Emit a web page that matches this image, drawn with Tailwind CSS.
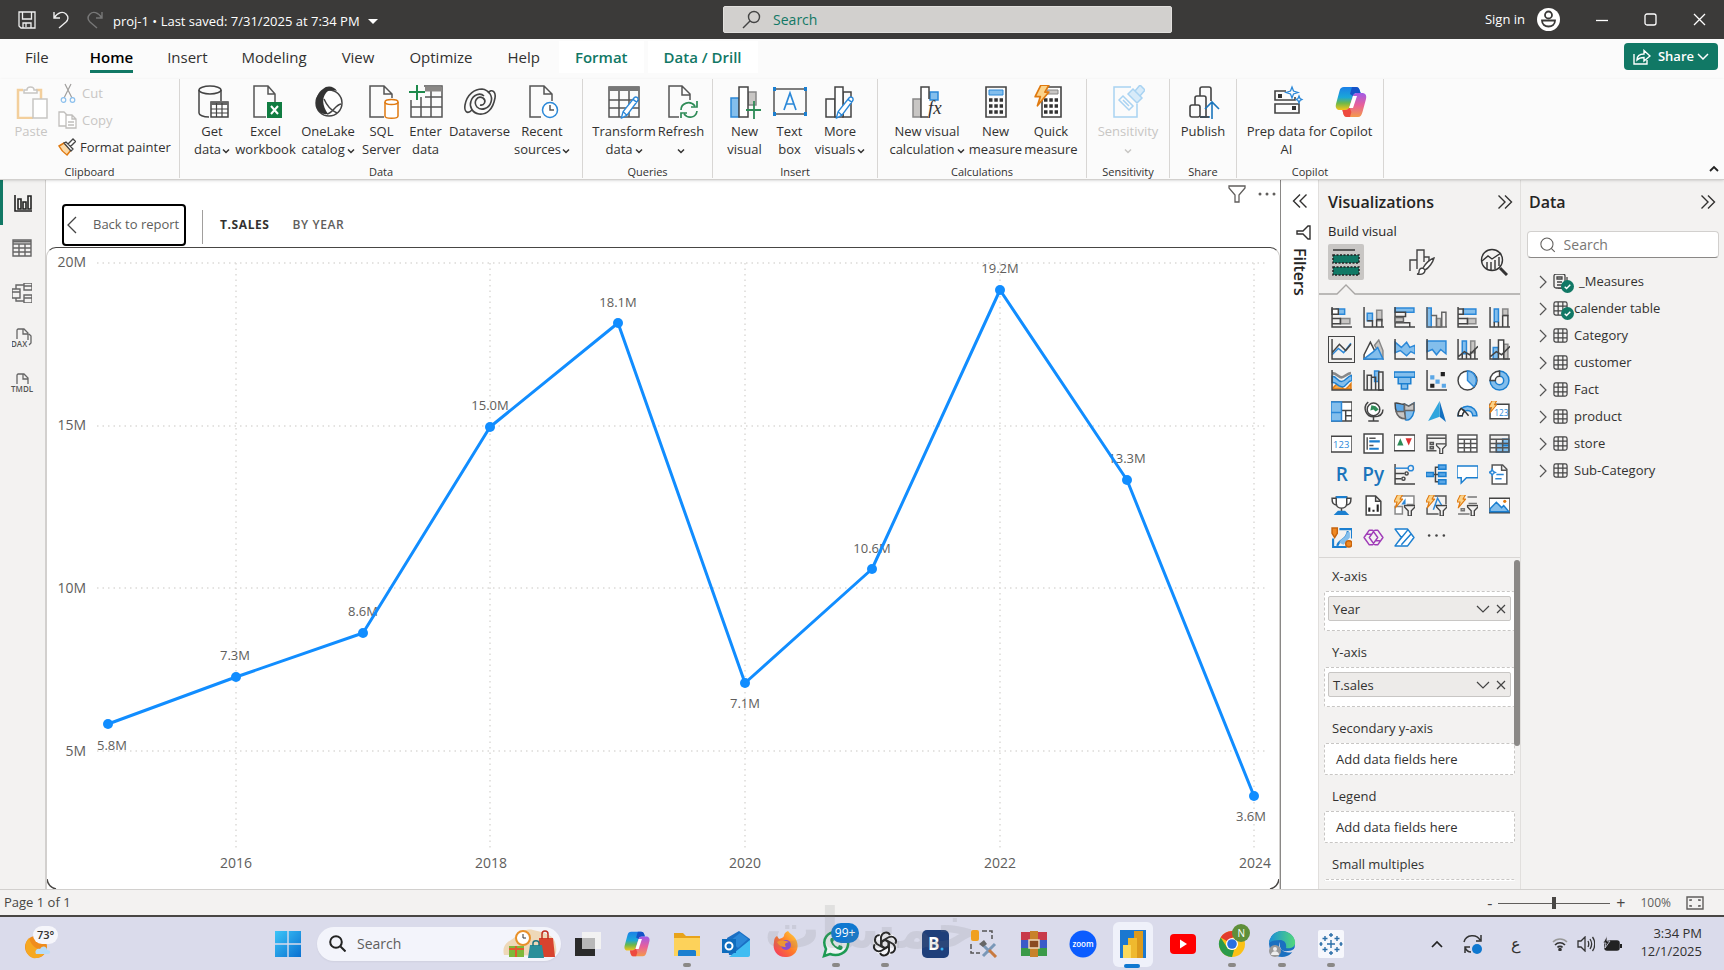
<!DOCTYPE html>
<html lang="en">
<head>
  <meta charset="UTF-8" />
  <meta name="viewport" content="width=device-width, initial-scale=1.0" />
  <title>proj-1 - Power BI Desktop</title>
  <script src="https://cdn.jsdelivr.net/npm/@tailwindcss/browser@4"></script>
</head>
<body class="h-screen flex flex-col overflow-hidden bg-[#f3f2f1] font-['Open_Sans',sans-serif] text-[13px] text-[#323130]">

  <!-- Shared gradients and symbols -->
  <svg class="absolute size-0" aria-hidden="true">
    <defs>
      <linearGradient id="copA" x1="0" y1="0" x2="0" y2="1"><stop offset="0" stop-color="#1b7fe8" /><stop offset=".45" stop-color="#1aa7d8" /><stop offset=".7" stop-color="#6cb84a" /><stop offset="1" stop-color="#f6c51a" /></linearGradient>
      <linearGradient id="copB" x1="0" y1="0" x2="0" y2="1"><stop offset="0" stop-color="#a05be8" /><stop offset=".5" stop-color="#e8609a" /><stop offset="1" stop-color="#f49a4a" /></linearGradient>
      <linearGradient id="win" x1="0" y1="0" x2="1" y2="1"><stop offset="0" stop-color="#3cc5f8" /><stop offset="1" stop-color="#0a6fd0" /></linearGradient>
      <linearGradient id="fox" x1="1" y1="0" x2="0" y2="1"><stop offset="0" stop-color="#ffd83a" /><stop offset=".5" stop-color="#ff7a2a" /><stop offset="1" stop-color="#f0306a" /></linearGradient>
      <linearGradient id="edge" x1="0" y1="0" x2="1" y2="0"><stop offset="0" stop-color="#1a8fd8" /><stop offset="1" stop-color="#52d87a" /></linearGradient>
    </defs>
    <symbol id="copilot" viewBox="0 0 34 34">
      <path d="M10 2h12c2 0 3 1 3.600 3l1 3h-4c-2 0-3 1-3.600 3l-3 10c-.7 2.500-2 4-4.500 4H6c-3 0-5-2-4-6L5.500 6C6.300 3 7.500 2 10 2z" fill="url(#copA)" />
      <path d="M18 2h4c2 0 3 1 3.600 3l1 3h-4c-2 0-3 1-3.600 3L16 9z" fill="#1553c8" />
      <path d="M24 32H13c-2 0-3-1-3.600-3l-1-4h3c2 0 3.300-1 4-3l3.500-11c.7-2 2-3 4-3H28c3 0 5 2 4 6l-3.500 13c-.8 3-2 5-4.500 5z" fill="url(#copB)" />
      <path d="M16 32h-3c-2 0-3-1-3.600-3l-1-4h3c2 0 3.300-1 4-3l2 5z" fill="#ee4a3e" />
      <path d="M19 11h4l-4 12h-4z" fill="#fff" />
    </symbol>
    <symbol id="chev" viewBox="0 0 8 8"><path d="M1 2.500L4 5.500L7 2.500" fill="none" stroke="currentColor" stroke-width="1.500" /></symbol>
    <symbol id="pencil" viewBox="0 0 22 26"><path d="M1 25l2-7L15 3c2-2 5 0 4 3L7 22zM3 18l4 4M14 5l4 3" fill="#fff" stroke="#2b88d8" stroke-width="1.500" stroke-linejoin="round" /></symbol>
    <symbol id="bolt" viewBox="0 0 14 20"><path d="M6 1h7l-3.500 6H13L3 19l2.500-8H1z" fill="#fbd38a" stroke="#e07a10" stroke-width="1.500" stroke-linejoin="round" /></symbol>
    <symbol id="table" viewBox="0 0 16 16"><path d="M3 1h10a2 2 0 0 1 2 2v10a2 2 0 0 1-2 2H3a2 2 0 0 1-2-2V3a2 2 0 0 1 2-2zM1 5.500h14M1 10.500h14M5.500 1v14M10.500 1v14" fill="none" stroke="#444" stroke-width="1.300" /></symbol>
    <symbol id="funnel" viewBox="0 0 12 12"><path d="M1 1h10v1.500L7.500 6v5h-3V6L1 2.500z" fill="#f3f2f1" stroke="#444" stroke-width="1.300" /></symbol>
    <symbol id="check" viewBox="0 0 14 14"><circle cx="7" cy="7" r="7" fill="#117865" /><path d="M4 7.200l2 2L10 5.200" fill="none" stroke="#fff" stroke-width="1.500" /></symbol>
    <symbol id="dbl" viewBox="0 0 16 16"><path d="M1.500 1.500L8 8l-6.500 6.500M8 1.500L14.500 8L8 14.500" fill="none" stroke="#323130" stroke-width="1.400" /></symbol>
  </svg>

  <!-- Title bar -->
  <header class="h-[39px] shrink-0 bg-[#3b3a39] text-white grid grid-cols-[42fr_26fr_32fr] items-center">
    <div class="flex items-center pl-[18px]">
      <button aria-label="Save"><svg class="size-[18px]" viewBox="0 0 18 18" fill="none" stroke="#eee" stroke-width="1.300"><path d="M1 1h16v16H3l-2-2zM4.500 1v7h9V1M5 17v-5h8v5M8 12v4" /></svg></button>
      <button aria-label="Undo" class="ml-4"><svg class="size-[18px]" viewBox="0 0 18 18" fill="none" stroke="#eee" stroke-width="1.400"><path d="M2 1v6h6M2 7C6 1 11 0 14 3s2 6 0 8l-7 6" /></svg></button>
      <button aria-label="Redo" class="ml-4"><svg class="size-[18px]" viewBox="0 0 18 18" fill="none" stroke="#777" stroke-width="1.400"><path d="M16 1v6h-6M16 7C12 1 7 0 4 3s-2 6 0 8l7 6" /></svg></button>
      <button class="ml-[9px] pt-1 flex items-center gap-2 whitespace-nowrap">proj-1 • Last saved: 7/31/2025 at 7:34 PM
        <svg class="w-[10px] h-[5px]" viewBox="0 0 10 5"><path d="M0 0h10L5 5z" fill="#fff" /></svg></button>
    </div>
    <label class="h-[27px] -ml-px bg-[#d2d0ce] rounded-xs border border-[#e1dfdd] flex items-center pl-[18px] gap-3">
      <svg class="size-[19px]" viewBox="0 0 19 19" fill="none" stroke="#444" stroke-width="1.400"><circle cx="12" cy="7" r="5.500" /><path d="M8 11l-7 7" /></svg>
      <input type="text" aria-label="Search" placeholder="Search" class="flex-1 bg-transparent outline-none text-sm placeholder:text-[#117865]" />
    </label>
    <div class="flex items-center justify-end pr-[18px]">
      <button class="flex items-center gap-3">Sign in
        <svg class="size-[23px]" viewBox="0 0 23 23"><circle cx="11.500" cy="11.500" r="11.500" fill="#fff" /><g fill="none" stroke="#3b3a39" stroke-width="1.800"><circle cx="11.500" cy="7" r="3.500" /><path d="M5 12.500h13c0 4-3 6-6.500 6S5 16.500 5 12.500z" /></g></svg></button>
      <button aria-label="Minimize" class="ml-9"><svg class="size-3" viewBox="0 0 12 12"><path d="M0 6.500h12" stroke="#fff" stroke-width="1.300" /></svg></button>
      <button aria-label="Maximize" class="ml-9"><svg class="size-[13px]" viewBox="0 0 13 13"><rect x="1" y="1" width="11" height="11" rx="2" fill="none" stroke="#fff" stroke-width="1.300" /></svg></button>
      <button aria-label="Close" class="ml-9"><svg class="size-[13px]" viewBox="0 0 13 13"><path d="M1 1l11 11M12 1L1 12" stroke="#fff" stroke-width="1.300" /></svg></button>
    </div>
  </header>

  <!-- Ribbon tabs -->
  <nav class="h-10 shrink-0 bg-[#fbfbfb] flex items-start gap-[35px] pl-[25px] pr-[6px] pt-[2px] text-[15px]">
    <button class="mr-[6px] h-8">File</button>
    <button class="h-8 font-semibold border-b-[3px] border-[#117865] pt-[3px] text-black">Home</button>
    <button class="h-8 -ml-px">Insert</button>
    <button class="h-8 -ml-px">Modeling</button>
    <button class="h-8">View</button>
    <button class="h-8">Optimize</button>
    <button class="h-8">Help</button>
    <div class="flex gap-1 -ml-4 font-semibold text-[#117865]">
      <button class="h-8 bg-white px-4">Format</button>
      <button class="h-8 bg-white px-4">Data / Drill</button>
    </div>
    <button class="ml-auto mt-[2px] h-[27px] w-[94px] rounded-[4px] bg-[#117865] text-white text-[13px] font-semibold flex items-center justify-center gap-[7px]">
      <svg class="w-[18px] h-4" viewBox="0 0 18 16" fill="none" stroke="#fff" stroke-width="1.400"><path d="M1 5v10h13v-4M4 11c0-4 3-6 7-6V1.500L17 7l-6 5V8.500c-3 0-5 .5-7 2.500z" /></svg>
      <span>Share</span>
      <svg class="-ml-1 w-3 h-[7px]" viewBox="0 0 12 7"><path d="M1 1l5 5l5-5" fill="none" stroke="#fff" stroke-width="1.500" /></svg>
    </button>
  </nav>

  <!-- Ribbon -->
  <section class="relative z-10 h-[101px] shrink-0 bg-[#fbfbfb] border-b border-[#d2d0ce] shadow-sm flex items-start leading-[18px] [&_.grp]:h-[99px] [&_.grp]:flex [&_.grp]:flex-col [&_.grp]:justify-between [&_.grp]:border-r [&_.grp]:border-[#d8d6d4] [&_h3]:text-center [&_h3]:text-[11px] [&_h3]:leading-[13px] [&_.tile]:pt-[6px] [&_.tile]:flex [&_.tile]:flex-col [&_.tile]:items-center [&_.tile]:gap-[3px] [&_.tile]:whitespace-nowrap [&_.ic]:size-[34px]">
    <div class="grp w-[180px]">
      <div class="flex">
        <button disabled class="tile w-[62px] text-[#c8c6c4]">
          <svg class="ic" viewBox="0 0 34 34" fill="none"><path d="M9 5H4v28h15M22 5h5v9" stroke="#f3cf9c" stroke-width="2.500" /><path d="M10 8V5h3c0-4 7-4 7 0h3v3zM19 14h14v19H19z" fill="#fff" stroke="#c8c6c4" stroke-width="1.500" /></svg>
          <span>Paste</span></button>
        <div class="flex flex-col items-start">
          <button disabled class="flex items-center h-[27px] gap-1 text-[#c8c6c4]"><svg class="w-[18px] h-5 -ml-[2px]" viewBox="0 0 18 20" fill="none" stroke="#a19f9d" stroke-width="1.200"><path d="M5 1l7 14M11 1L4 15" /><circle cx="3.500" cy="17" r="2.300" stroke="#8cc0ee" /><circle cx="12.500" cy="17" r="2.300" stroke="#8cc0ee" /></svg>Cut</button>
          <button disabled class="flex items-center h-[27px] gap-1 -ml-1 text-[#c8c6c4]"><svg class="w-5 h-[18px]" viewBox="0 0 20 18" fill="#fff" stroke="#c0bebc" stroke-width="1.300"><path d="M8 15H1V1h5l3 3" /><path d="M8 4h6l4 4v9H8zM14 4v4h4M10 11h6M10 14h6" /></svg>Copy</button>
          <button class="flex items-center h-[27px] gap-1 -ml-1 whitespace-nowrap"><svg class="size-[18px]" viewBox="0 0 18 18"><path d="M1 8l5-3 7 7-4 5c-3-2-6-5-8-9z" fill="#fbd9a8" stroke="#e07a10" stroke-width="1.500" /><path d="M6 5l2-1 7 7-2 2zM10 6l5-5 2.500 2.500-5 5" fill="#fff" stroke="#444" stroke-width="1.300" /></svg>Format painter</button>
        </div>
      </div>
      <h3>Clipboard</h3>
    </div>

    <div class="grp w-[403px]">
      <div class="flex pl-[10px]">
        <button class="tile w-[44px]">
          <svg class="ic" viewBox="0 0 34 34" fill="none" stroke="#444" stroke-width="1.500"><ellipse cx="15" cy="5" rx="11" ry="4" /><path d="M4 5v23c0 2 4 4 10 4M26 5v11" /><path d="M16 17h17v15H16z" fill="#fff" /><path d="M16 18.500h17" stroke-width="3" stroke="#666" /><path d="M16 24h17M16 28h17M21.500 18v14M27 18v14" stroke-width="1.200" /></svg>
          <span>Get<br>data<svg class="inline size-2 ml-px" aria-hidden="true"><use href="#chev" /></svg></span></button>
        <button class="tile w-[63px]">
          <svg class="ic" viewBox="0 0 34 34" fill="none" stroke="#555" stroke-width="1.500"><path d="M17 32H5V1h14l7 8v9M19 1v8h7" /><path d="M18 17h15v16H18z" fill="#107c41" stroke="none" /><path d="M22 21l7 8M29 21l-7 8" stroke="#fff" stroke-width="2" /></svg>
          <span>Excel<br>workbook</span></button>
        <button class="tile w-[62px]">
          <svg class="ic" viewBox="0 0 34 34"><circle cx="18" cy="18" r="13" fill="#fff" stroke="#444" stroke-width="1.500" /><path d="M12 4c4-4 11-3 14 2-5-2-9-1-11 2-4 5-4 12 2 21-6 1-12-3-12-10 0-6 2-12 7-15z" fill="#333" /><path d="M13 14c3 7 8 12 13 14M16 29c6-1 8-9 14-10" fill="none" stroke="#444" stroke-width="1.500" /></svg>
          <span>OneLake<br>catalog<svg class="inline size-2 ml-[2px]" aria-hidden="true"><use href="#chev" /></svg></span></button>
        <button class="tile w-[45px]">
          <svg class="ic" viewBox="0 0 34 34" fill="none" stroke="#555" stroke-width="1.500"><path d="M19 32H5V1h14l8 8v4M19 1v8h8" /><path d="M20 17v14c0 3 13 3 13 0V17" fill="#fff" stroke="#e07a10" /><ellipse cx="26.500" cy="17" rx="6.500" ry="2.500" fill="#fff" stroke="#e07a10" /></svg>
          <span>SQL<br>Server</span></button>
        <button class="tile w-[43px]">
          <svg class="ic" viewBox="0 0 34 34" fill="none" stroke="#555" stroke-width="1.500"><path d="M15 1h18v31H2V15M2 22h31M12 12v20M22 6v26M16 12h17" /><path d="M16 4h17" stroke="#8a8886" stroke-width="5" /><path d="M8-1v16M0 7h16" stroke="#1e8a4c" stroke-width="2" /></svg>
          <span>Enter<br>data</span></button>
        <button class="tile w-[65px]">
          <svg class="ic" viewBox="0 0 34 34" fill="none" stroke="#444" stroke-width="1.600"><path d="M9 25c-5 5-8 1-7-5C4 9 12 4 19 4c7 1 11 7 9 13-2 7-10 9-14 5-4-5 0-12 6-9 4 3 1 8-3 7" /><path d="M25 8c4-5 8-1 7 5-2 11-8 17-16 16-7-1-10-8-8-13 2-6 9-9 13-5" /></svg>
          <span>Dataverse</span></button>
        <button class="tile w-[60px]">
          <svg class="ic" viewBox="0 0 34 34" fill="none" stroke="#555" stroke-width="1.500"><path d="M16 32H5V1h14l8 8v7M19 1v8h8" /><circle cx="25" cy="25" r="7.500" fill="#fff" stroke="#2b88d8" /><path d="M25 20v5h4" /></svg>
          <span>Recent<br>sources<svg class="inline size-2 ml-px" aria-hidden="true"><use href="#chev" /></svg></span></button>
      </div>
      <h3>Data</h3>
    </div>

    <div class="grp w-[130px]">
      <div class="flex pl-2">
        <button class="tile w-[66px]">
          <svg class="ic" viewBox="0 0 34 34" fill="none" stroke="#555" stroke-width="1.500"><path d="M2 2h30v30H2zM2 15h30M2 23h30M12 6v26M22 6v26" /><path d="M2 4h30" stroke="#777" stroke-width="4" /><use href="#pencil" x="12" y="10" width="23" height="24" /></svg>
          <span>Transform<br>data<svg class="inline size-2 ml-[2px]" aria-hidden="true"><use href="#chev" /></svg></span></button>
        <button class="tile w-[48px]">
          <svg class="ic" viewBox="0 0 34 34" fill="none" stroke="#555" stroke-width="1.500"><path d="M15 32H5V1h13l8 8v6M18 1v9h8" /><path d="M17 25c0-7 9-10 14-4M33 16v6h-6M33 26c-1 7-9 8-13 3M17 33v-5h6" stroke="#2e8b57" stroke-width="1.700" /></svg>
          <span>Refresh<br><svg class="inline size-2" aria-hidden="true"><use href="#chev" /></svg></span></button>
      </div>
      <h3>Queries</h3>
    </div>

    <div class="grp w-[165px]">
      <div class="flex pl-[10px]">
        <button class="tile w-[43px]">
          <svg class="ic" viewBox="0 0 34 34" fill="none" stroke="#444" stroke-width="1.500"><path d="M3 13h8v19H3z" fill="#83beec" stroke="#2b88d8" /><path d="M20 7h8v13h-8z" fill="#c8c6c4" stroke="#888" /><path d="M11 2h9v30h-9z" fill="#fff" /><path d="M26 16v18M18 25h15" stroke="#2e8b57" stroke-width="1.800" /></svg>
          <span>New<br>visual</span></button>
        <button class="tile w-[47px]">
          <svg class="ic" viewBox="0 0 34 34" fill="none"><path d="M1 4h32v25H1z" stroke="#555" stroke-width="1.500" /><path d="M11 25l6-17 6 17M13 19h8" stroke="#2b88d8" stroke-width="1.700" /><path d="M-1 2h4v4h-4zM31 2h4v4h-4zM-1 27h4v4h-4zM31 27h4v4h-4z" fill="#1b7fd0" /></svg>
          <span>Text<br>box</span></button>
        <button class="tile w-[54px]">
          <svg class="ic" viewBox="0 0 34 34" fill="none" stroke="#444" stroke-width="1.500"><path d="M3 14h9v18H3zM20 7h8v25h-8z" /><path d="M12 2h8v30h-8z" fill="#fff" /><use href="#pencil" x="11" y="10" width="23" height="24" /></svg>
          <span>More<br>visuals<svg class="inline size-2 ml-[2px]" aria-hidden="true"><use href="#chev" /></svg></span></button>
      </div>
      <h3>Insert</h3>
    </div>

    <div class="grp w-[209px]">
      <div class="flex pl-2">
        <button class="tile w-[82px]">
          <svg class="ic" viewBox="0 0 34 34"><path d="M3 14h8v18H3z" fill="#c8c6c4" stroke="#888" stroke-width="1.500" /><path d="M20 7h8v8h-8z" fill="#83beec" stroke="#2b88d8" stroke-width="1.500" /><path d="M18 32h-7V2h8v12" fill="#fff" stroke="#444" stroke-width="1.500" /><text x="18" y="29" font-family="Liberation Serif, serif" font-size="19" font-style="italic" fill="#333">fx</text></svg>
          <span>New visual<br>calculation<svg class="inline size-2 ml-[2px]" aria-hidden="true"><use href="#chev" /></svg></span></button>
        <button class="tile w-[55px]">
          <svg class="ic" viewBox="0 0 34 34" fill="none"><path d="M7 2h20v30H7z" stroke="#444" stroke-width="1.600" /><path d="M10 5h14v5H10z" fill="#83beec" stroke="#2b88d8" /><path d="M10 15h14M10 21h14M10 27h14" stroke="#333" stroke-width="3.500" stroke-dasharray="3.500 1.800" /></svg>
          <span>New<br>measure</span></button>
        <button class="tile w-[56px]">
          <svg class="ic" viewBox="0 0 34 34" fill="none"><path d="M8 2h19v30H8z" fill="#fff" stroke="#444" stroke-width="1.600" /><path d="M13 5h11v4H13z" fill="#c8c6c4" stroke="#888" /><path d="M10 15h14M10 21h14M10 27h14" stroke="#333" stroke-width="3.500" stroke-dasharray="3.500 1.800" /><use href="#bolt" x="0" y="-1" width="16" height="23" /></svg>
          <span>Quick<br>measure</span></button>
      </div>
      <h3>Calculations</h3>
    </div>

    <div class="grp w-[83px]">
      <button disabled class="tile w-full text-[#c8c6c4]">
        <svg class="ic" viewBox="0 0 34 34" fill="none" stroke="#a9d3f2" stroke-width="1.500"><path d="M20 2H3v30h23V19" /><path d="M8 15l4-4 10 10-4 4zM12 15l6 6" /><path d="M17 9l5-5 9 9-5 5zM24 6l5-6 5 5-5 6z" fill="#d8ebf9" /></svg>
        <span>Sensitivity<br><svg class="inline size-2" aria-hidden="true"><use href="#chev" /></svg></span></button>
      <h3>Sensitivity</h3>
    </div>

    <div class="grp w-[67px]">
      <button class="tile w-full">
        <svg class="ic" viewBox="0 0 34 34" fill="none" stroke="#444" stroke-width="1.600"><rect x="4" y="20" width="10" height="12" rx="2" /><path d="M9 20v-7c0-2 1-2 2-2h7c2 0 2 1 2 2v19h-6" /><path d="M14 11V4c0-2 1-2 2-2h7c2 0 2 1 2 2v12" /><path d="M14 32h10M26 34V17M19 24l7-7 7 7" stroke="#1b75bc" /><path d="M14 32h9" /></svg>
        <span>Publish</span></button>
      <h3>Share</h3>
    </div>

    <div class="grp w-[147px]">
      <div class="flex pl-[9px]">
        <button class="tile w-[81px]">
          <svg class="ic" viewBox="0 0 34 34" fill="none" stroke="#444" stroke-width="1.600"><path d="M16 6H5v9h20v-3M5 19h24v9H5z" /><path d="M8 9h4v4H8zM22 21h4v4h-4z" fill="#333" stroke="none" /><path d="M22 2l1.500 4L28 7.500 23.500 9 22 13l-1.500-4L16 7.500 20.500 6zM29 11l1 2.500 2 1-2 1-1 2.500-1-2.500-2-1 2-1z" stroke="#2b88d8" stroke-width="1.300" /></svg>
          <span>Prep data for<br>AI</span></button>
        <button class="tile w-[48px]">
          <svg class="ic"><use href="#copilot" /></svg>
          <span>Copilot</span></button>
      </div>
      <h3>Copilot</h3>
    </div>
    <button aria-label="Collapse ribbon" class="ml-auto mr-[5px] self-end mb-[7px]"><svg class="w-[10px] h-[7px]" viewBox="0 0 10 7"><path d="M1 6l4-4l4 4" fill="none" stroke="#222" stroke-width="1.800" /></svg></button>
  </section>

  <main class="flex-1 min-h-0 flex">
    <!-- View switcher -->
    <nav class="w-[46px] shrink-0 border-r border-[#d2d0ce] flex flex-col items-center [&_button]:h-[45px] [&_button]:w-full [&_button]:pr-px [&_button]:grid [&_button]:place-items-center [&_svg]:size-5">
      <button aria-label="Report view" class="border-l-[3px] border-[#117865]"><svg class="-ml-[2px]" viewBox="0 0 20 20" fill="none" stroke="#222" stroke-width="1.600"><path d="M2 2v16h17M5 6h3v10H5zM10 9h3v7h-3zM15 3h3v13h-3z" /></svg></button>
      <button aria-label="Table view"><svg viewBox="0 0 20 20" fill="none" stroke="#666" stroke-width="1.400"><path d="M1 2h18v16H1zM1 6h18M1 10h18M1 14h18M7 6v12M13 6v12" /><path d="M1 3.500h18" stroke-width="2" /></svg></button>
      <button aria-label="Model view"><svg viewBox="0 0 20 20" fill="none" stroke="#666" stroke-width="1.400"><path d="M0 6h8v9H0zM0 9h8M12 0h8v7h-8zM12 3h8M12 12h8v8h-8zM12 15h8M4 6V2h8M4 15v3h8" /></svg></button>
      <button aria-label="DAX query view"><svg viewBox="0 0 20 20" fill="none" stroke="#666" stroke-width="1.300"><path d="M5 11V2l1-1h6l4 4v7M11 1v5h5M17 6l2 2v7l-2 2" /><text x="-1" y="19" font-size="8" font-weight="600" fill="#555" stroke="none">DAX</text></svg></button>
      <button aria-label="TMDL view"><svg viewBox="0 0 20 20" fill="none" stroke="#666" stroke-width="1.300" overflow="visible"><path d="M5 11V2l1-1h6l4 4v6M11 1v5h5" /><text x="-1" y="19" font-size="8" font-weight="600" fill="#555" stroke="none">TMDL</text></svg></button>
    </nav>

    <!-- Focused visual -->
    <section class="flex-1 min-w-0 bg-white border-r border-[#8a8886] flex flex-col">
      <div class="h-[67px] shrink-0 flex items-start pt-6 pl-4 pr-1">
        <button class="h-[42px] w-[124px] shrink-0 rounded-[4px] border-2 border-black flex items-center gap-4 pl-[3px] text-[#605e5c] whitespace-nowrap">
          <svg class="w-[10px] h-[18px] shrink-0" viewBox="0 0 10 18"><path d="M9 1L1 9l8 8" fill="none" stroke="#444" stroke-width="1.300" /></svg>Back to report</button>
        <div class="ml-4 mt-[6px] h-[34px] border-l border-[#a19f9d]"></div>
        <h1 class="ml-[17px] mt-3 text-xs leading-[18px] font-bold tracking-wider text-[#323130]">T.SALES</h1>
        <h2 class="ml-[23px] mt-3 text-xs leading-[18px] font-semibold tracking-wider text-[#605e5c]">BY YEAR</h2>
        <div class="ml-auto -mt-[19px] flex items-center gap-3">
          <button aria-label="Filters on visual"><svg class="size-[18px]" viewBox="0 0 18 18"><path d="M1 1h16v2l-6 7v7H7v-7L1 3z" fill="none" stroke="#605e5c" stroke-width="1.300" /></svg></button>
          <button aria-label="More options"><svg class="w-[18px] h-1" viewBox="0 0 18 4" fill="#605e5c"><circle cx="2" cy="2" r="1.500" /><circle cx="9" cy="2" r="1.500" /><circle cx="16" cy="2" r="1.500" /></svg></button>
        </div>
      </div>
      <div class="flex-1 min-h-0 rounded-t-[10px] border-t border-x border-t-[#484644] border-x-[#d2d0ce]">
        <svg class="w-full h-full" viewBox="47 248 1232 641" font-size="14" fill="#605e5c">
          <g stroke="#dcdad8" stroke-width="1.500" stroke-dasharray="1.500 4">
            <path d="M97 263H1266M97 426H1266M97 588H1266M97 751H1266" />
            <path d="M236 263V850M490 263V850M745 263V850M1000 263V850M1254 263V850" />
          </g>
          <g text-anchor="end">
            <text x="86" y="267">20M</text><text x="86" y="430">15M</text><text x="86" y="593">10M</text><text x="86" y="756">5M</text>
          </g>
          <g text-anchor="middle">
            <text x="236" y="868">2016</text><text x="491" y="868">2018</text><text x="745" y="868">2020</text><text x="1000" y="868">2022</text><text x="1255" y="868">2024</text>
          </g>
          <g text-anchor="middle" font-size="13">
            <text x="112" y="750">5.8M</text><text x="235" y="660">7.3M</text><text x="363" y="616">8.6M</text><text x="490" y="410">15.0M</text><text x="618" y="307">18.1M</text>
            <text x="745" y="708">7.1M</text><text x="872" y="553">10.6M</text><text x="1000" y="273">19.2M</text><text x="1127" y="463">13.3M</text><text x="1251" y="821">3.6M</text>
          </g>
          <path d="M108 724L236 677L363 633L490 427L618 323L745 683L872 569L1000 290L1127 480L1254 796" fill="none" stroke="#118dff" stroke-width="3" stroke-linejoin="round" />
          <g fill="#118dff">
            <circle cx="108" cy="724" r="5" /><circle cx="236" cy="677" r="5" /><circle cx="363" cy="633" r="5" /><circle cx="490" cy="427" r="5" /><circle cx="618" cy="323" r="5" />
            <circle cx="745" cy="683" r="5" /><circle cx="872" cy="569" r="5" /><circle cx="1000" cy="290" r="5" /><circle cx="1127" cy="480" r="5" /><circle cx="1254" cy="796" r="5" />
          </g>
          <path d="M47 879q1 8 9 10M1279 879q-1 8-9 10" fill="none" stroke="#484644" stroke-width="1.500" />
        </svg>
      </div>
    </section>

    <!-- Collapsed filters pane -->
    <aside class="w-[37px] shrink-0 bg-white flex flex-col items-center pt-[13px] pl-px">
      <button aria-label="Expand filters"><svg class="size-4 rotate-180"><use href="#dbl" /></svg></button>
      <svg class="mt-4 ml-[6px] size-[15px]" viewBox="0 0 15 15"><path d="M14 1v13h-2L7 9H1V6h6l5-5z" fill="none" stroke="#323130" stroke-width="1.400" /></svg>
      <h2 class="mt-2 [writing-mode:vertical-rl] text-base leading-5 font-semibold text-[#252423]">Filters</h2>
    </aside>

    <!-- Visualizations pane -->
    <aside class="w-[203px] shrink-0 border-x border-[#e1dfdd] flex flex-col">
      <div class="flex items-center justify-between pl-[9px] pr-[7px] pt-2 h-9">
        <h2 class="text-base font-semibold text-[#252423]">Visualizations</h2>
        <button aria-label="Collapse visualizations"><svg class="size-4"><use href="#dbl" /></svg></button>
      </div>
      <p class="pl-[9px] mt-1 leading-[22px] text-[13px] text-[#252423]">Build visual</p>
      <div class="mt-[2px] pl-[9px] pr-3 flex items-center justify-between">
        <button aria-label="Build visual" class="size-9 bg-[#c8c6c4] rounded-xs grid place-items-center"><svg class="size-7" viewBox="0 0 28 28"><path d="M1 2h22" stroke="#333" stroke-width="1.500" /><path d="M1 7h26v8H1zM1 19h26v8H1z" fill="#117865" stroke="#222" stroke-width="1.500" stroke-dasharray="2 1.500" /></svg></button>
        <button aria-label="Format visual"><svg class="size-[26px]" viewBox="0 0 26 26" fill="none" stroke="#444" stroke-width="1.400"><path d="M1 22V11h7v9M8 14V1h7v12M15 8h5v4" /><path d="M25 9c-4 1-9 6-11 10l2 2c4-2 8-8 9-12zM14 19c-3 0-4 2-4 4s-2 2-2 2c4 1 8 0 8-4" fill="#fff" /></svg></button>
        <button aria-label="Analytics"><svg class="size-7" viewBox="0 0 28 28" fill="none" stroke="#333" stroke-width="1.400"><circle cx="12" cy="12" r="10.500" /><path d="M2 13l6-5 4 3 9-6M7 21v-7M11 22v-8M15 21v-9M19 18V9" /><path d="M20 20l7 7" stroke-width="3" /></svg></button>
      </div>
      <svg class="mt-1 h-[11px] w-full shrink-0" viewBox="0 0 201 11" preserveAspectRatio="none"><path d="M0 10H18L27 1L36 10H201" fill="none" stroke="#a8a6a4" stroke-width="1.300" /></svg>

      <div class="mt-[7px] ml-[7px] mr-[5px] h-[251px] shrink-0 grid grid-cols-6 grid-rows-8 [&_button]:grid [&_button]:place-items-center [&_svg]:size-[21px] [&_svg]:fill-none [&_svg]:stroke-[1.4]">
        <button aria-label="Stacked bar chart"><svg viewBox="0 0 20 20"><path d="M5 2h8v5H5z" fill="#83beec" stroke="#2b88d8" /><path d="M1 2h6v5H1z" fill="#fff" stroke="#444" /><path d="M9 11h9v5H9z" fill="#c8c6c4" stroke="#888" /><path d="M1 0v19h19M1 11h8v5H1z" stroke="#444" /></svg></button>
        <button aria-label="Stacked column chart"><svg viewBox="0 0 20 20"><path d="M4 6h5v7H4z" fill="#83beec" stroke="#2b88d8" /><path d="M13 3h5v10h-5z" fill="#c8c6c4" stroke="#888" /><path d="M1 0v19h19M4 13h5v6M13 12h5v7M13 12v7" stroke="#444" /></svg></button>
        <button aria-label="Clustered bar chart"><svg viewBox="0 0 20 20"><path d="M1 1h18v4H1z" fill="#83beec" stroke="#2b88d8" /><path d="M1 5h10v4H1zM1 15h14v4M1 0v19h19" stroke="#444" /><path d="M1 10h8v4H1z" fill="#c8c6c4" stroke="#666" /></svg></button>
        <button aria-label="Clustered column chart"><svg viewBox="0 0 20 20"><path d="M1 1h4v18H1z" fill="#83beec" stroke="#2b88d8" /><path d="M10 11h4v8h-4z" fill="#c8c6c4" stroke="#888" /><path d="M5 8h5v11M15 19V5h4v14M1 0v19h19" stroke="#666" /></svg></button>
        <button aria-label="100% stacked bar chart"><svg viewBox="0 0 20 20"><path d="M6 2h12v5H6z" fill="#83beec" stroke="#2b88d8" /><path d="M10 11h8v5h-8z" fill="#c8c6c4" stroke="#888" /><path d="M1 2h5v5H1zM1 11h9v5H1zM1 0v19h19" stroke="#444" /></svg></button>
        <button aria-label="100% stacked column chart"><svg viewBox="0 0 20 20"><path d="M5 2h4v12H5z" fill="#83beec" stroke="#2b88d8" /><path d="M13 2h5v6h-5z" fill="#c8c6c4" stroke="#888" /><path d="M1 0v19h19M5 14v5M9 14v5M13 8h5v11M13 8v11" stroke="#444" /></svg></button>

        <button aria-label="Line chart" class="border border-[#444] -m-px size-[27px] justify-self-center self-center"><svg viewBox="0 0 20 20"><path d="M1 15l6-6 5 4 7-9" stroke="#2b88d8" /><path d="M1 0v19h19M1 13l7-8 6 6 5-6" stroke="#444" /></svg></button>
        <button aria-label="Area chart"><svg viewBox="0 0 20 20"><path d="M11 6l4-5 4 10v8z" fill="#c8c6c4" stroke="#888" /><path d="M1 15L7 3l6 12v4H1z" fill="#fff" stroke="#444" /><path d="M1 19l9-7 4-4 5 11z" fill="#83beec" stroke="#2b88d8" /></svg></button>
        <button aria-label="Stacked area chart"><svg viewBox="0 0 20 20"><path d="M1 3l6 5 5-5 3 5 5-2v8l-4-2-4 4-6-5-5 2z" fill="#83beec" stroke="#2b88d8" /><path d="M1 0v19h19" stroke="#444" /></svg></button>
        <button aria-label="100% stacked area chart"><svg viewBox="0 0 20 20"><path d="M1 2h18v12l-5-4-4 5-4-5-5 2z" fill="#83beec" stroke="#2b88d8" /><path d="M1 0v19h19" stroke="#444" /></svg></button>
        <button aria-label="Line and stacked column chart"><svg viewBox="0 0 20 20"><path d="M5 2h4v12H5z" fill="#83beec" stroke="#2b88d8" /><path d="M13 2h4v11h-4z" fill="#c8c6c4" stroke="#888" /><path d="M1 0v19h19M5 14v5M9 14v5M13 12v7M17 9v10M1 17l6-5 5 3 8-8" stroke="#444" /></svg></button>
        <button aria-label="Line and clustered column chart"><svg viewBox="0 0 20 20"><path d="M4 8h5v11H4z" fill="#83beec" stroke="#2b88d8" /><path d="M14 5h4v14h-4z" fill="#c8c6c4" stroke="#888" /><path d="M9 19V1h5v18" fill="#fff" stroke="#444" /><path d="M1 0v19h19M1 17l6-5 5 3 8-8" stroke="#444" /></svg></button>

        <button aria-label="Ribbon chart"><svg viewBox="0 0 20 20"><path d="M2 17c5-6 8-6 9-1s5 1 8-3v5H2z" fill="#f5a94a" stroke="#e07a10" /><path d="M1 6c5 0 5 5 9 5s5-5 10-6v5c-5 0-5 7-10 6S5 11 1 12z" fill="#83beec" stroke="#1b7fd0" /><path d="M1 3c5 0 6 4 9 4s5-4 9-4" stroke="#888" stroke-width="2.500" /><path d="M1 0v19h19" stroke="#444" /></svg></button>
        <button aria-label="Waterfall chart"><svg viewBox="0 0 20 20"><path d="M11 1h4v10h-4z" fill="#83beec" stroke="#2b88d8" /><path d="M15 2h4v17h-4z" fill="#eee" stroke="#444" /><path d="M1 0v19h19M4 19V5h4v14M8 7h4v12" stroke="#444" /></svg></button>
        <button aria-label="Funnel chart"><svg viewBox="0 0 20 20"><path d="M0 2h20v5H0zM4 7h12v6H4zM7 13h6v5H7z" fill="#83beec" stroke="#1b7fd0" /></svg></button>
        <button aria-label="Scatter chart"><svg viewBox="0 0 20 20"><path d="M1 0v19h19" stroke="#444" /><path d="M14 2h4v4h-4zM4 13h4v4H4z" fill="#222" /><path d="M4 5h4v4H4zM9 9h4v4H9zM15 13h4v4h-4z" fill="#5ba7e6" /></svg></button>
        <button aria-label="Pie chart"><svg viewBox="0 0 20 20"><circle cx="10" cy="10" r="9" fill="#fff" stroke="#444" /><path d="M10 1a9 9 0 0 1 6 15L10 10z" fill="#83beec" stroke="#2b88d8" /></svg></button>
        <button aria-label="Donut chart"><svg viewBox="0 0 20 20"><path d="M10 1a9 9 0 1 1-9 9h5a4 4 0 1 0 4-4z" fill="#83beec" stroke="#1b7fd0" /><path d="M10 1a9 9 0 0 0-9 9h5a4 4 0 0 1 4-4z" fill="#fff" stroke="#444" /></svg></button>

        <button aria-label="Treemap"><svg viewBox="0 0 20 20"><path d="M0 1h20v18H0zM14 9v10M10 9h10M14 14h6" fill="#fff" stroke="#444" /><path d="M0 1h10v18H0zM0 11h10" fill="#83beec" stroke="#2b88d8" /></svg></button>
        <button aria-label="Map"><svg viewBox="0 0 20 20"><circle cx="10" cy="8" r="6" fill="#fff" stroke="#444" /><path d="M8 4l4 1 3 3-3 2-2-2-3 1z" fill="#2e8b57" /><path d="M5 1c-6 5-2 14 5 14s9-3 9-7M10 15v4M5 19h10" stroke="#444" /></svg></button>
        <button aria-label="Filled map"><svg viewBox="0 0 20 20"><path d="M10 3l4 2 5-3v8c-1 6-5 9-8 8l-1-6z" fill="#83beec" stroke="#1b7fd0" /><path d="M1 2c3-1 6 2 9 1v9l-3 3C3 14 1 9 1 2z" fill="#5ba7e6" stroke="#444" /><path d="M10 3l4 2 5-3v7h-9zM2 10h8l1 7c-5 0-8-3-9-7z" fill="#c8c6c4" stroke="#666" /></svg></button>
        <button aria-label="Azure map"><svg viewBox="0 0 20 20"><path d="M13 0l6 20-6-5z" fill="#1370c0" /><path d="M13 0L2 19l11-4z" fill="#2fa5dd" /></svg></button>
        <button aria-label="Gauge"><svg viewBox="0 0 20 20"><path d="M1 14a9 9 0 0 1 18 0h-4a5 5 0 0 0-10 0z" fill="#83beec" stroke="#1b7fd0" /><path d="M1 14c0-3 1-5 3-7l3 3c-1 1-2 2-2 4zM6 8l5 6" fill="#fff" stroke="#333" /></svg></button>
        <button aria-label="Card (new)"><svg viewBox="0 0 20 20"><path d="M1 3h18v14H1z" fill="#fff" stroke="#444" /><text x="5" y="14" font-size="8" fill="#2b88d8" stroke="none">123</text><use href="#bolt" x="-1" y="-1" width="9" height="13" /></svg></button>

        <button aria-label="Card"><svg viewBox="0 0 20 20"><path d="M0 3h20v15H0z" fill="#fff" stroke="#444" /><text x="2" y="14" font-size="9" fill="#2b88d8" stroke="none">123</text></svg></button>
        <button aria-label="Multi-row card"><svg viewBox="0 0 20 20"><path d="M1 1h18v18H1z" fill="#fff" stroke="#444" /><path d="M4 4v12M6 5h6M6 12h4" stroke="#555" /><path d="M6 8h10M6 15h9" stroke="#1b7fd0" stroke-width="2" /></svg></button>
        <button aria-label="KPI"><svg viewBox="0 0 20 20"><path d="M0 2h20v15H0z" fill="#fff" stroke="#444" /><path d="M3 12l3-7 3 7z" fill="#2e8b57" /><path d="M11 5h6l-3 7z" fill="#e03030" /></svg></button>
        <button aria-label="Slicer"><svg viewBox="0 0 20 20"><path d="M10 17H1V2h18v8M1 5h18M4 9h3v2H4zM4 13h3v2H4z" stroke="#555" /><use href="#funnel" x="9" y="9" width="11" height="12" /></svg></button>
        <button aria-label="Table"><svg viewBox="0 0 20 20"><path d="M1 2h18v16H1zM1 6h18M1 10h18M1 14h18M7 6v12M13 6v12" fill="#fff" stroke="#555" /></svg></button>
        <button aria-label="Matrix"><svg viewBox="0 0 20 20"><path d="M7 10h12v8H7zM13 6h6v6h-6z" fill="#83beec" stroke="#1b7fd0" /><path d="M1 2h18v16H1zM1 6h18M1 10h18M1 14h18M7 6v12M13 6v12" stroke="#555" /></svg></button>

        <button class="text-[19px] font-semibold leading-none text-[#1b75bc]">R</button>
        <button class="text-[19px] font-semibold leading-none text-[#1b75bc]">Py</button>
        <button aria-label="Key influencers"><svg viewBox="0 0 20 20"><path d="M1 0v19h19M1 9h9M1 14h6" stroke="#444" /><path d="M1 4h13" stroke="#2b88d8" /><circle cx="16" cy="4" r="2.500" stroke="#2b88d8" /><circle cx="12" cy="9" r="1.500" stroke="#444" /><circle cx="9" cy="14" r="1.500" stroke="#444" /></svg></button>
        <button aria-label="Decomposition tree"><svg viewBox="0 0 20 20"><path d="M7 10h5M12 3H9v14h3" stroke="#444" /><path d="M0 8h7v4H0zM12 1h7v4h-7zM12 8h7v4h-7zM12 15h7v4h-7z" fill="#5ba7e6" stroke="#1b7fd0" /></svg></button>
        <button aria-label="Q&A"><svg viewBox="0 0 20 20"><path d="M0 2h20v11H9l-5 5v-5H0z" fill="#fff" stroke="#1b7fd0" /></svg></button>
        <button aria-label="Smart narrative"><svg viewBox="0 0 20 20"><path d="M3 5V1h10l4 4v14H3v-8M12 1v5h5" fill="#fff" stroke="#555" /><path d="M3 5l1 2 2 1-2 1-1 2-1-2-2-1 2-1zM7 10h7M6 14h6" stroke="#2b88d8" /></svg></button>

        <button aria-label="Goals"><svg viewBox="0 0 20 20"><path d="M5 2h10v6c0 6-10 6-10 0zM5 3H1c0 5 1 6 5 7M15 3h4c0 5-1 6-5 7M10 12v5" fill="#fff" stroke="#444" /><path d="M5 2h10M5 18h10l-2-2H7z" fill="#83beec" stroke="#1b7fd0" stroke-width="2" /></svg></button>
        <button aria-label="Paginated report"><svg viewBox="0 0 20 20"><path d="M3 1h9l5 5v13H3zM12 1v5h5" fill="#fff" stroke="#444" /><path d="M6 16v-4M10 16v-2M14 16V9" stroke="#222" stroke-width="2" /></svg></button>
        <button aria-label="Button slicer"><svg viewBox="0 0 20 20"><path d="M7 1h12v8h-7M1 11h7v7H1z" stroke="#888" fill="#fff" /><path d="M7 9l4-6v6z" fill="#2b88d8" /><use href="#bolt" x="-1" y="-1" width="10" height="14" /><use href="#funnel" x="9" y="9" width="12" height="12" /></svg></button>
        <button aria-label="Text slicer"><svg viewBox="0 0 20 20"><path d="M8 1h11v8M1 12v6h11" stroke="#555" /><path d="M7 14l4-11 4 7M8 10h5" stroke="#2b88d8" /><use href="#bolt" x="-1" y="-1" width="10" height="14" /><use href="#funnel" x="9" y="9" width="12" height="12" /></svg></button>
        <button aria-label="List slicer"><svg viewBox="0 0 20 20"><path d="M10 2h9M11 8h8M4 13h3v2H4zM1 18h11" stroke="#777" /><use href="#bolt" x="-1" y="-1" width="10" height="14" /><use href="#funnel" x="9" y="9" width="12" height="12" /></svg></button>
        <button aria-label="Image"><svg viewBox="0 0 20 20"><path d="M0 3h20v14H0z" fill="#fff" stroke="#444" /><path d="M1 13l6-6 5 5 2-2 5 6H1z" fill="#83beec" stroke="#1b7fd0" /><circle cx="15" cy="6" r="1.500" fill="#e07a10" /></svg></button>

        <button aria-label="ArcGIS map"><svg viewBox="0 0 20 20"><path d="M8 2h12v9M2 11v8h13M6 18c1-7 9-4 10-14" stroke="#1b7fd0" stroke-width="2" /><path d="M8 15c1-5 6-3 7-10h3v5l-6 7z" fill="#83beec" /><path d="M1 1h5v5L3.500 10 1 6z" fill="#f08a24" stroke="#c8640c" /><circle cx="17" cy="16" r="3" fill="#f08a24" stroke="#c8640c" /></svg></button>
        <button aria-label="Power Apps"><svg viewBox="0 0 20 20"><path d="M6 3l-5 7 5 7h3l5-7-5-7zM11 3h3l5 7-5 7h-3M11 3l-5 7 5 7M4 7h4M12 13h4" stroke="#a03cb8" stroke-linejoin="round" /></svg></button>
        <button aria-label="Power Automate"><svg viewBox="0 0 20 20"><path d="M1 2h12l6 8-6 8H1l6-8zM13 3L4 14M16 7L7 17" fill="#fff" stroke="#1b7fd0" stroke-linejoin="round" /></svg></button>
        <button aria-label="Get more visuals"><svg viewBox="0 0 20 20"><g fill="#444"><circle cx="3" cy="8" r="1.200" /><circle cx="10" cy="8" r="1.200" /><circle cx="17" cy="8" r="1.200" /></g></svg></button>
      </div>

      <!-- Field wells -->
      <div class="relative mt-1 mb-2 flex-1 min-h-0 overflow-hidden border-t border-[#d8d6d4] pt-2 pl-[5px] pr-[5px] leading-5 [&_h3]:pl-2 [&_.well]:mt-[5px] [&_.well]:mb-[11px] [&_.well]:bg-white [&_.well]:border [&_.well]:border-dashed [&_.well]:border-[#c8c6c4] [&_.well]:rounded-xs">
        <h3>X-axis</h3>
        <div class="well h-10 px-[3px] pt-1">
          <div class="h-[25px] bg-[#edebe9] border border-[#c8c6c4] rounded-xs flex items-center pl-1 pr-1 gap-[6px]"><span class="flex-1">Year</span>
            <button aria-label="Year options"><svg class="w-[14px] h-2" viewBox="0 0 14 8"><path d="M1 1l6 6l6-6" fill="none" stroke="#444" stroke-width="1.200" /></svg></button>
            <button aria-label="Remove Year"><svg class="size-[10px]" viewBox="0 0 10 10"><path d="M1 1l8 8M9 1L1 9" stroke="#444" stroke-width="1.200" /></svg></button></div>
        </div>
        <h3>Y-axis</h3>
        <div class="well h-10 px-[3px] pt-1">
          <div class="h-[25px] bg-[#edebe9] border border-[#c8c6c4] rounded-xs flex items-center pl-1 pr-1 gap-[6px]"><span class="flex-1">T.sales</span>
            <button aria-label="T.sales options"><svg class="w-[14px] h-2" viewBox="0 0 14 8"><path d="M1 1l6 6l6-6" fill="none" stroke="#444" stroke-width="1.200" /></svg></button>
            <button aria-label="Remove T.sales"><svg class="size-[10px]" viewBox="0 0 10 10"><path d="M1 1l8 8M9 1L1 9" stroke="#444" stroke-width="1.200" /></svg></button></div>
        </div>
        <h3>Secondary y-axis</h3>
        <div class="well h-8 pl-[11px] leading-[30px]">Add data fields here</div>
        <h3>Legend</h3>
        <div class="well h-8 pl-[11px] leading-[30px]">Add data fields here</div>
        <h3>Small multiples</h3>
        <div class="well h-8"></div>
        <div class="absolute right-0 top-[2px] w-[6px] h-[186px] rounded-full bg-[#8a8886]"></div>
      </div>
    </aside>

    <!-- Data pane -->
    <aside class="w-[203px] shrink-0 flex flex-col">
      <div class="flex items-center justify-between pl-2 pr-2 pt-2 h-9">
        <h2 class="text-base font-semibold text-[#252423]">Data</h2>
        <button aria-label="Collapse data"><svg class="size-4"><use href="#dbl" /></svg></button>
      </div>
      <label class="mt-[15px] ml-[6px] mr-[5px] h-[27px] shrink-0 bg-white rounded-[4px] border border-[#d2d0ce] border-b-[#8a8886] flex items-center pl-3 gap-2">
        <svg class="size-[18px]" viewBox="0 0 18 18" fill="none" stroke="#605e5c" stroke-width="1.200"><circle cx="8" cy="8" r="7" /><path d="M13 13l4 4" /></svg>
        <input type="text" aria-label="Search fields" placeholder="Search" class="w-full min-w-0 outline-none text-sm placeholder:text-[#797775]" />
      </label>
      <ul class="mt-[10px] pl-[18px] [&_button]:h-[27px] [&_button]:flex [&_button]:items-center [&_button]:gap-[6px] [&_.arr]:w-2 [&_.arr]:h-[14px] [&_.tb]:size-[15px]">
        <li><button><svg class="arr" viewBox="0 0 8 14"><path d="M1 1l6 6l-6 6" fill="none" stroke="#555" stroke-width="1.200" /></svg>
          <span class="relative flex"><svg class="tb" viewBox="0 0 15 15" fill="none" stroke="#444" stroke-width="1.300"><rect x="1" y="0" width="11" height="14" rx="2" /><path d="M4 3h5v2H4zM4 8h5M4 11h5M14 3v10l-2 2H5" /></svg><svg class="absolute left-2 top-[6px] size-[13px]"><use href="#check" /></svg></span><span class="pl-[5px]">_Measures</span></button></li>
        <li><button><svg class="arr" viewBox="0 0 8 14"><path d="M1 1l6 6l-6 6" fill="none" stroke="#555" stroke-width="1.200" /></svg>
          <span class="relative flex"><svg class="tb"><use href="#table" /></svg><svg class="absolute left-2 top-[6px] size-[13px]"><use href="#check" /></svg></span>calender table</button></li>
        <li><button><svg class="arr" viewBox="0 0 8 14"><path d="M1 1l6 6l-6 6" fill="none" stroke="#555" stroke-width="1.200" /></svg><svg class="tb"><use href="#table" /></svg>Category</button></li>
        <li><button><svg class="arr" viewBox="0 0 8 14"><path d="M1 1l6 6l-6 6" fill="none" stroke="#555" stroke-width="1.200" /></svg><svg class="tb"><use href="#table" /></svg>customer</button></li>
        <li><button><svg class="arr" viewBox="0 0 8 14"><path d="M1 1l6 6l-6 6" fill="none" stroke="#555" stroke-width="1.200" /></svg><svg class="tb"><use href="#table" /></svg>Fact</button></li>
        <li><button><svg class="arr" viewBox="0 0 8 14"><path d="M1 1l6 6l-6 6" fill="none" stroke="#555" stroke-width="1.200" /></svg><svg class="tb"><use href="#table" /></svg>product</button></li>
        <li><button><svg class="arr" viewBox="0 0 8 14"><path d="M1 1l6 6l-6 6" fill="none" stroke="#555" stroke-width="1.200" /></svg><svg class="tb"><use href="#table" /></svg>store</button></li>
        <li><button><svg class="arr" viewBox="0 0 8 14"><path d="M1 1l6 6l-6 6" fill="none" stroke="#555" stroke-width="1.200" /></svg><svg class="tb"><use href="#table" /></svg>Sub-Category</button></li>
      </ul>
    </aside>
  </main>

  <!-- Status bar -->
  <footer class="h-7 shrink-0 border-t border-[#d2d0ce] border-b-2 border-b-[#484644] flex items-center pl-1 pr-5 pt-px text-[#484644]">
    <span>Page 1 of 1</span>
    <button aria-label="Zoom out" class="ml-auto text-base leading-none">-</button>
    <input type="range" aria-label="Zoom" min="0" max="100" value="50" class="mx-[6px] w-28 h-3 appearance-none bg-transparent [&::-webkit-slider-runnable-track]:h-px [&::-webkit-slider-runnable-track]:bg-[#605e5c] [&::-webkit-slider-thumb]:appearance-none [&::-webkit-slider-thumb]:w-1 [&::-webkit-slider-thumb]:h-3 [&::-webkit-slider-thumb]:-mt-[6px] [&::-webkit-slider-thumb]:bg-[#484644]" />
    <button aria-label="Zoom in" class="text-base leading-none">+</button>
    <span class="ml-[15px] text-xs text-[#605e5c]">100%</span>
    <button aria-label="Fit to page" class="ml-[15px]"><svg class="w-[18px] h-[14px]" viewBox="0 0 18 14" fill="none" stroke="#605e5c" stroke-width="1.400"><path d="M1 1h16v12H1zM4 5V4h2M12 4h2v1M4 9v1h2M12 10h2V9" /></svg></button>
  </footer>

  <!-- Windows taskbar -->
  <footer class="relative h-[53px] shrink-0 bg-[#dadbeb] flex items-center">
    <button aria-label="Weather" class="relative ml-[25px] w-[35px] h-9">
      <svg class="w-[35px] h-9" viewBox="0 0 35 36"><circle cx="11" cy="21" r="11" fill="#f08c1c" /><path d="M4 12c2 8 8 12 17 13-2 5-8 8-13 7-8-3-10-14-4-20z" fill="#f6a821" /><path d="M11 28c-2-4 2-6 4-5 2-4 7-3 7 1 4 0 4 4 1 4z" fill="#b8dcf8" /></svg>
      <span class="absolute left-2 top-0 rounded-full bg-[#f6f6fb] px-1 text-[11px] leading-[18px] font-semibold">73°</span>
    </button>
    <button aria-label="Start" class="ml-[215px]"><svg class="size-[26px]" viewBox="0 0 26 26" fill="url(#win)"><path d="M0 0h12.300v12.300H0zM13.700 0H26v12.300H13.700zM0 13.700h12.300V26H0zM13.700 13.700H26V26H13.700z" /></svg></button>
    <label class="ml-4 w-[244px] h-[34px] shrink-0 rounded-full bg-[#f3f4fb] shadow-xs flex items-center pl-3 pr-1 gap-[11px]">
      <svg class="size-[17px] shrink-0" viewBox="0 0 17 17" fill="none" stroke="#222" stroke-width="2"><circle cx="7" cy="7" r="5.800" /><path d="M11.500 11.500l5 5" /></svg>
      <input type="text" aria-label="Search Windows" placeholder="Search" class="flex-1 min-w-0 bg-transparent outline-none text-sm placeholder:text-[#605e5c]" />
      <svg class="w-[54px] h-[30px] shrink-0" viewBox="0 0 54 30"><path d="M1 26C-2 14 8 12 12 8s10-9 18-7 20 4 22 12 2 12-2 14z" fill="#eed8b8" /><circle cx="20" cy="9" r="7" fill="#fff" stroke="#e8902a" stroke-width="2" /><path d="M20 5v4h3" stroke="#333" fill="none" /><path d="M6 17h15v11H6z" fill="#7eb83a" /><path d="M13 17v11M6 20h15" stroke="#e05a30" stroke-width="2" /><path d="M36 9h14l2 19H36z" fill="#d8432e" /><path d="M39 10V5c0-4 6-4 6 0v5" fill="none" stroke="#c03020" stroke-width="1.500" /><path d="M27 16h12l2 13H25z" fill="#2a8f9a" /><path d="M30 17v-3c0-3 6-3 6 0v3" fill="none" stroke="#207580" stroke-width="1.500" /></svg>
    </label>
    <div class="ml-[2px] h-full w-[793px] shrink-0 grid grid-cols-16 [&_button]:relative [&_button]:grid [&_button]:place-items-center [&_svg]:size-7 [&_.dot]:absolute [&_.dot]:bottom-[3px] [&_.dot]:left-[21px] [&_.dot]:w-2 [&_.dot]:h-[4px] [&_.dot]:rounded-full [&_.dot]:bg-[#8a8886]">
      <button aria-label="Task view"><svg viewBox="0 0 28 28"><path d="M1 8h20v18H1z" fill="#2a2a2a" /><path d="M8 2h19v17H8z" fill="#f2f2f2" /><path d="M8 8h13v11H8z" fill="#b8b8b8" /></svg></button>
      <button aria-label="Copilot"><svg><use href="#copilot" /></svg></button>
      <button aria-label="File Explorer"><svg viewBox="0 0 28 28"><path d="M1 3h9l3 3h14v6H1z" fill="#e8a31a" /><path d="M1 8h26v18H1z" fill="#fdd25a" /><path d="M5 26v-4c0-2 1-2 2-2h14c2 0 2 1 2 2v4z" fill="#1b7fd0" /></svg><i class="dot"></i></button>
      <button aria-label="Outlook"><svg viewBox="0 0 28 28"><path d="M5 8L17 1l11 8v16H7z" fill="#1a6fc4" /><path d="M8 11L18 3l8 6-10 9z" fill="#2b88d8" /><path d="M7 27l21-17v15c0 1-1 2-2 2z" fill="#40bdf2" /><path d="M0 9h14v14H0z" fill="#0f6cbd" /><circle cx="7" cy="16" r="3.500" fill="none" stroke="#fff" stroke-width="2" /></svg></button>
      <button aria-label="Firefox"><svg viewBox="0 0 28 28"><path d="M16 1c2 3 5 4 7 7 5 7 3 18-8 19C5 28 0 20 2 12c0-3 1-5 3-6l2 3c2-1 4-1 5-3 0-2 1-4 4-5z" fill="url(#fox)" /><circle cx="14" cy="15" r="5" fill="#8a4ad8" /><path d="M5 12c5-3 9-1 12 0-4 1-5 2-3 5-4 0-7-1-9-5z" fill="#ff9a2a" /></svg></button>
      <button aria-label="WhatsApp"><svg viewBox="0 0 28 28"><path d="M2 26l2-7C-1 9 6 2 14 2s13 7 12 13c-1 8-10 12-18 9z" fill="#eef4f4" stroke="#1c9a52" stroke-width="2.500" /><path d="M9 8c-3 3 4 12 10 12 2-1 2-3 1-4l-3-1-1 2c-2 0-5-4-5-5l1-2-1-2z" fill="#1c9a52" /></svg><span class="absolute left-5 top-[6px] rounded-full bg-[#0f78d0] px-1 text-[12px] leading-[20px] text-white">99+</span><i class="dot"></i></button>
      <button aria-label="ChatGPT"><svg viewBox="0 0 28 28" fill="none" stroke="#222" stroke-width="1.900"><circle cx="14" cy="14" r="12" fill="#f4f4f8" stroke="none" /><path id="petal" d="M14 10l4 2.500V21c-1 5-7 6-9 2" /><use href="#petal" transform="rotate(60 14 14)" /><use href="#petal" transform="rotate(120 14 14)" /><use href="#petal" transform="rotate(180 14 14)" /><use href="#petal" transform="rotate(240 14 14)" /><use href="#petal" transform="rotate(300 14 14)" /></svg><i class="dot"></i></button>
      <button aria-label="Booking"><svg viewBox="0 0 28 28"><rect x="1" y="0" width="27" height="28" rx="5" fill="#1f3f7a" /><text x="7" y="20" font-size="17" font-weight="700" fill="#fff">B</text><circle cx="21" cy="19" r="1.500" fill="#3ab0f0" /></svg></button>
      <button aria-label="SQL tools"><svg viewBox="0 0 28 28"><path d="M12 1h10v8M1 14v9h9" fill="none" stroke="#555" stroke-width="1.500" stroke-dasharray="5 2" /><rect x="1" y="0" width="8" height="11" rx="2" fill="#f0a020" /><path d="M12 14l8 8M25 14L13 26" stroke="#7a98b8" stroke-width="3" /><path d="M9 14l5-4 3 4-4 3z" fill="#666" /><path d="M19 20l7 7" stroke="#c87a40" stroke-width="3" /></svg></button>
      <button aria-label="WinRAR"><svg viewBox="0 0 28 28"><path d="M1 2h26v8H1z" fill="#c83a4a" /><path d="M1 10h26v8H1z" fill="#3a5ac8" /><path d="M1 18h26v8H1z" fill="#3a9a48" /><path d="M10 1h8v26h-8z" fill="#c8822a" /><path d="M9 10h10v8H9z" fill="#8a4a20" stroke="#eed8b8" stroke-width="1.500" /></svg></button>
      <button aria-label="Zoom"><svg viewBox="0 0 28 28"><circle cx="14" cy="14" r="13.500" fill="#0b5cff" /><text x="14" y="17" font-size="8" font-weight="600" text-anchor="middle" fill="#fff">zoom</text></svg></button>
      <button aria-label="Power BI Desktop"><span class="absolute inset-x-[5px] top-[5px] bottom-[3px] rounded-md bg-[#eff1fa]"></span><svg class="relative" viewBox="0 0 28 28"><path d="M1 0h26v28H1z" fill="#1b78d0" /><path d="M15 1h9v27h-9z" fill="#dc9a1c" /><path d="M9 8h9v20H9z" fill="#efb92e" /><path d="M4 15h8v13H4z" fill="#fbd95c" /></svg><i class="absolute bottom-[2px] left-4 w-4 h-1 rounded-full bg-[#0f78d0]"></i></button>
      <button aria-label="YouTube"><svg viewBox="0 0 28 28"><rect x="1" y="4" width="26" height="20" rx="4" fill="#f00" /><path d="M11 9.500l7 4.500-7 4.500z" fill="#fff" /></svg></button>
      <button aria-label="Chrome"><svg viewBox="0 0 28 28"><circle cx="14" cy="14" r="13" fill="#fbc116" /><path d="M14 14L2.700 7.500A13 13 0 0 1 25.300 7.500H14z" fill="#e23c2e" /><path d="M14 27A13 13 0 0 1 2.700 7.500L10 19l6 1z" fill="#2a9a4a" /><circle cx="14" cy="14" r="6" fill="#fff" /><circle cx="14" cy="14" r="4.800" fill="#2a6fe0" /></svg><span class="absolute left-[25px] top-[7px] size-[18px] rounded-full bg-[#5f8f3a] text-[10px] leading-[18px] text-white">N</span><i class="dot"></i></button>
      <button aria-label="Edge"><svg viewBox="0 0 28 28"><circle cx="14" cy="14" r="13" fill="#1a70c0" /><path d="M1 13C2 5 8 1 14 1c9 0 14 8 13 13-1 4-6 5-9 4 1-5-2-8-6-8-5 0-9 1-11 3z" fill="url(#edge)" /><path d="M12 12c-3 5 1 10 8 9 3 0 5-1 7-3v3c-8 4-17 0-15-9z" fill="#dadbeb" /><circle cx="7" cy="21" r="6" fill="#999" /><circle cx="7" cy="19" r="2" fill="#eee" /><path d="M3 25c0-5 8-5 8 0z" fill="#eee" /></svg><i class="dot"></i></button>
      <button aria-label="Tableau"><svg viewBox="0 0 28 28"><rect x="1" y="0" width="26" height="28" rx="2" fill="#f6f7fc" /><path d="M14 10v8M10 14h8M14 3v4M12 5h4M14 21v4M12 23h4M8 6v5M5.500 8.500h5M20 6v5M17.500 8.500h5M8 17v5M5.500 19.500h5M20 17v5M17.500 19.500h5M4 12v4M2.500 14h3M24 12v4M22.500 14h3" stroke="#2b6ea8" stroke-width="1.400" /></svg><i class="dot"></i></button>
    </div>
    <div class="ml-auto flex items-center pr-[22px]">
      <button aria-label="Show hidden icons"><svg class="w-3 h-2" viewBox="0 0 12 8"><path d="M1 7l5-5l5 5" fill="none" stroke="#222" stroke-width="1.700" /></svg></button>
      <button aria-label="Updates" class="ml-5"><svg class="size-5" viewBox="0 0 20 20" fill="none" stroke="#333" stroke-width="1.500"><path d="M1 8C3 0 14 0 17 6M18 1v6h-5M2 19v-6h5M2 13c1 3 3 5 6 5" /><circle cx="14" cy="15" r="5" fill="#0f78d0" stroke="none" /></svg></button>
      <button class="ml-7 text-base font-['DejaVu_Sans',sans-serif]" lang="ar">ع</button>
      <button aria-label="Wi-Fi" class="ml-8"><svg class="w-4 h-[14px]" viewBox="0 0 16 14" fill="none" stroke="#333" stroke-width="1.600"><path d="M1 5c4-4 10-4 14 0" stroke="#999" /><path d="M3 8c3-3 7-3 10 0M5.500 10.500c1-1.500 4-1.500 5 0" /><circle cx="8" cy="12.500" r="1" fill="#333" /></svg></button>
      <button aria-label="Volume" class="ml-[9px]"><svg class="w-[18px] h-4" viewBox="0 0 18 16" fill="none" stroke="#333" stroke-width="1.300"><path d="M1 5h3l4-4v14l-4-4H1zM11 5c1 2 1 4 0 6M13 3c2 3 2 7 0 10M15.500 1c3 4 3 10 0 14" /></svg></button>
      <button aria-label="Battery" class="ml-2"><svg class="w-[19px] h-4" viewBox="0 0 19 16"><rect x="2" y="5" width="14" height="9" rx="2" fill="#222" stroke="#222" stroke-width="1.500" /><path d="M17 8h2v4h-2z" fill="#222" /><path d="M4 0l-4 7h3l-1 5 5-7H4z" fill="#222" stroke="#dadbeb" stroke-width=".8" /></svg></button>
      <button class="ml-[18px] -mt-1 text-right leading-[18px]">3:34 PM<br>12/1/2025</button>
    </div>
    <div lang="ar" class="pointer-events-none absolute left-[764px] -top-4 w-[210px] text-center text-[56px] leading-[56px] font-bold font-['DejaVu_Sans',sans-serif] text-[#777777]/15">خمسات</div>
  </footer>
</body>
</html>
